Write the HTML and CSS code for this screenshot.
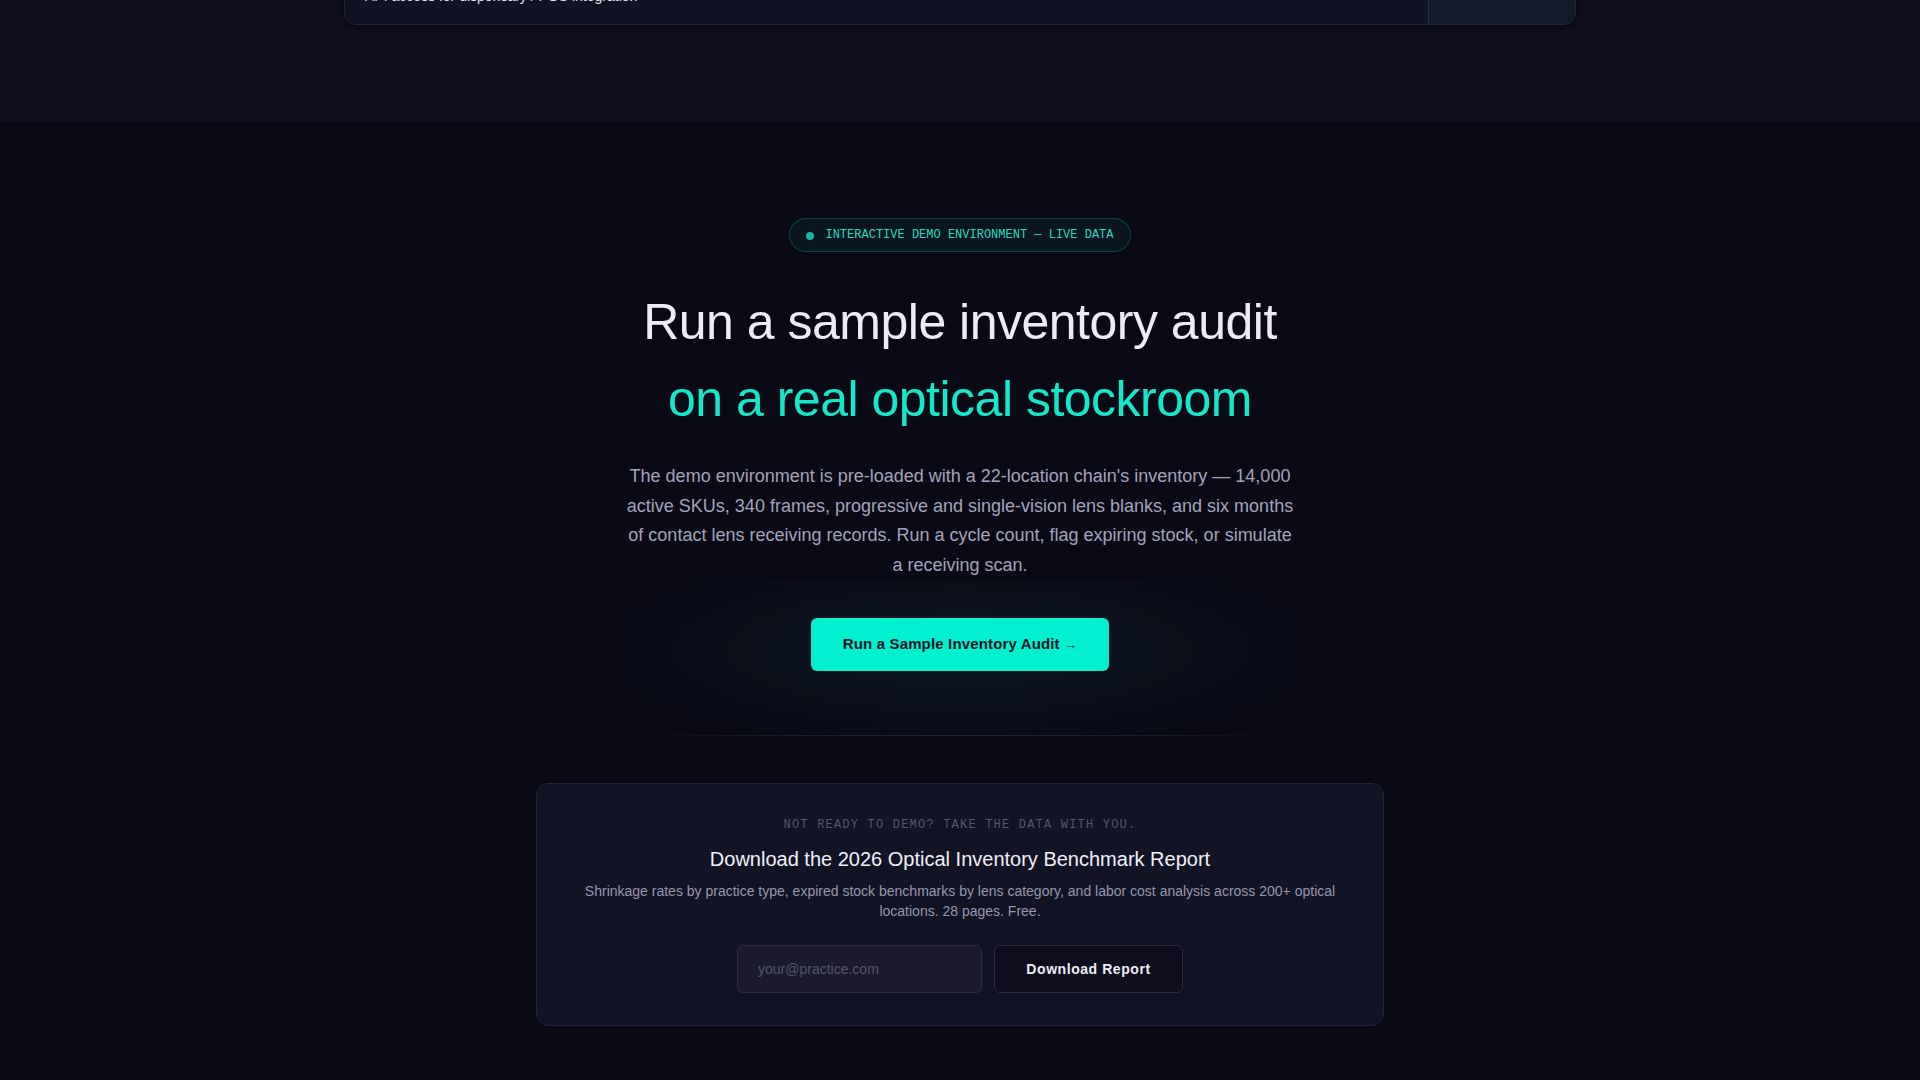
FILE: index.html
```html
<!DOCTYPE html>
<html lang="en">
<head>
<meta charset="utf-8">
<title>Run a sample inventory audit</title>
<link rel="stylesheet" href="styles.css">
</head>
<body>
  <section class="compare">
    <div class="compare-card">
      <div class="compare-row">
        <div class="cell cell-label">API access for dispensary / POS integration</div>
        <div class="cell cell-mark">✕</div>
        <div class="cell cell-empty"></div>
        <div class="cell cell-us"></div>
      </div>
    </div>
  </section>

  <section class="hero">
    <div class="badge"><span class="badge-dot"></span>INTERACTIVE DEMO ENVIRONMENT — LIVE DATA</div>
    <h1 class="hero-title">
      <span class="line-main">Run a sample inventory audit</span>
      <span class="line-accent">on a real optical stockroom</span>
    </h1>
    <p class="hero-text">The demo environment is pre-loaded with a 22-location chain's inventory — 14,000 active SKUs, 340 frames, progressive and single-vision lens blanks, and six months of contact lens receiving records. Run a cycle count, flag expiring stock, or simulate a receiving scan.</p>
    <div class="cta-zone">
      <a class="cta-button" href="#">Run a Sample Inventory Audit <span class="arrow">→</span></a>
    </div>

    <div class="report-card">
      <div class="eyebrow">NOT READY TO DEMO? TAKE THE DATA WITH YOU.</div>
      <h2 class="report-title">Download the 2026 Optical Inventory Benchmark Report</h2>
      <p class="report-text">Shrinkage rates by practice type, expired stock benchmarks by lens category, and labor cost analysis across 200+ optical locations. 28 pages. Free.</p>
      <form class="report-form">
        <input class="email-input" type="email" placeholder="your@practice.com">
        <button class="download-btn" type="button">Download Report</button>
      </form>
    </div>
  </section>
</body>
</html>
```

FILE: styles.css
```css
* {
  box-sizing: border-box;
}

html, body {
  margin: 0;
  padding: 0;
}

body {
  background: #0a0a17;
  font-family: "Liberation Sans", Arial, sans-serif;
  color: #ececf4;
  overflow: hidden;
}

/* ---------- comparison table remnant ---------- */
.compare {
  background: #0f0f1e;
  padding: 0 0 97px;
  overflow: hidden;
}

.compare-card {
  max-width: 1232px;
  margin: -33px auto 0;
  background: #121225;
  border: 1px solid #23233a;
  border-radius: 12px;
  overflow: hidden;
  box-shadow: 0 4px 10px rgba(0, 0, 0, 0.35);
}

.compare-row {
  display: grid;
  grid-template-columns: 580px 80px 1fr 147px;
}

.cell {
  padding: 18px 20px;
  font-size: 14px;
  line-height: 20px;
}

.cell-label {
  color: #e6e6f0;
}

.cell-mark {
  text-align: center;
  color: #5b4d7e;
  padding-left: 0;
  padding-right: 0;
}

.cell-us {
  background: #101a29;
  border-left: 1px solid #1b3340;
}

/* ---------- hero ---------- */
.hero {
  padding: 96px 0 60px;
  display: flex;
  flex-direction: column;
  align-items: center;
  text-align: center;
}

.badge {
  display: inline-flex;
  align-items: center;
  gap: 11px;
  padding: 8px 16px 7px;
  border: 1px solid rgba(20, 232, 200, 0.22);
  background: rgba(20, 232, 200, 0.06);
  border-radius: 999px;
  font-family: "Liberation Mono", "DejaVu Sans Mono", monospace;
  font-size: 12px;
  line-height: 17px;
  color: #2fd6bc;
}

.badge-dot {
  width: 8px;
  height: 8px;
  border-radius: 50%;
  background: #17b89f;
}

.hero-title {
  margin: 32px 0 0;
  font-weight: 400;
  font-size: 50px;
  letter-spacing: -0.01em;
  line-height: 77px;
}

.line-main,
.line-accent {
  display: block;
}

.line-main {
  color: #ececf4;
}

.line-accent {
  color: #14e8c8;
}

.hero-text {
  max-width: 672px;
  margin: 24px auto 0;
  font-size: 18px;
  line-height: 29.5px;
  color: #a3a3ba;
}

.cta-zone {
  width: 680px;
  padding: 38px 0 64px;
  display: flex;
  justify-content: center;
  background: radial-gradient(ellipse 55% 65% at 50% 45%, rgba(20, 232, 200, 0.06), rgba(20, 232, 200, 0) 100%);
  border-bottom: 1px solid transparent;
  border-image: linear-gradient(90deg, rgba(255, 255, 255, 0), rgba(255, 255, 255, 0.07) 25%, rgba(255, 255, 255, 0.09) 50%, rgba(255, 255, 255, 0.07) 75%, rgba(255, 255, 255, 0)) 1;
}

.cta-button {
  display: inline-block;
  padding: 17px 32px;
  background: #00f0d0;
  color: #0b1524;
  border-radius: 6px;
  font-weight: 700;
  font-size: 15px;
  line-height: 18px;
  letter-spacing: 0.01em;
  text-decoration: none;
}

.arrow {
  font-size: 13px;
}

/* ---------- report card ---------- */
.report-card {
  width: 848px;
  margin-top: 47px;
  padding: 33px 40px 32px;
  background: #131326;
  border: 1px solid #222238;
  border-radius: 12px;
}

.eyebrow {
  font-family: "Liberation Mono", "DejaVu Sans Mono", monospace;
  font-size: 12px;
  line-height: 16px;
  letter-spacing: 0.1em;
  color: #55556f;
}

.report-title {
  margin: 12px 0 0;
  font-size: 20px;
  font-weight: 400;
  line-height: 28px;
  color: #f0f0f8;
}

.report-text {
  margin: 8px 0 0;
  font-size: 14px;
  line-height: 20px;
  color: #9696ae;
}

.report-form {
  margin-top: 24px;
  display: flex;
  justify-content: center;
  gap: 12px;
}

.email-input {
  width: 245px;
  height: 48px;
  padding: 0 20px;
  background: #1a1a2c;
  border: 1px solid #2a2a40;
  border-radius: 6px;
  font-family: "Liberation Sans", Arial, sans-serif;
  font-size: 14px;
  color: #e0e0ea;
  outline: none;
}

.email-input::placeholder {
  color: #55556e;
}

.download-btn {
  width: 189px;
  height: 48px;
  background: #0e0e1f;
  border: 1px solid #2a2a40;
  border-radius: 6px;
  font-family: "Liberation Sans", Arial, sans-serif;
  font-weight: 700;
  font-size: 14px;
  letter-spacing: 0.04em;
  color: #ececf5;
}
```
